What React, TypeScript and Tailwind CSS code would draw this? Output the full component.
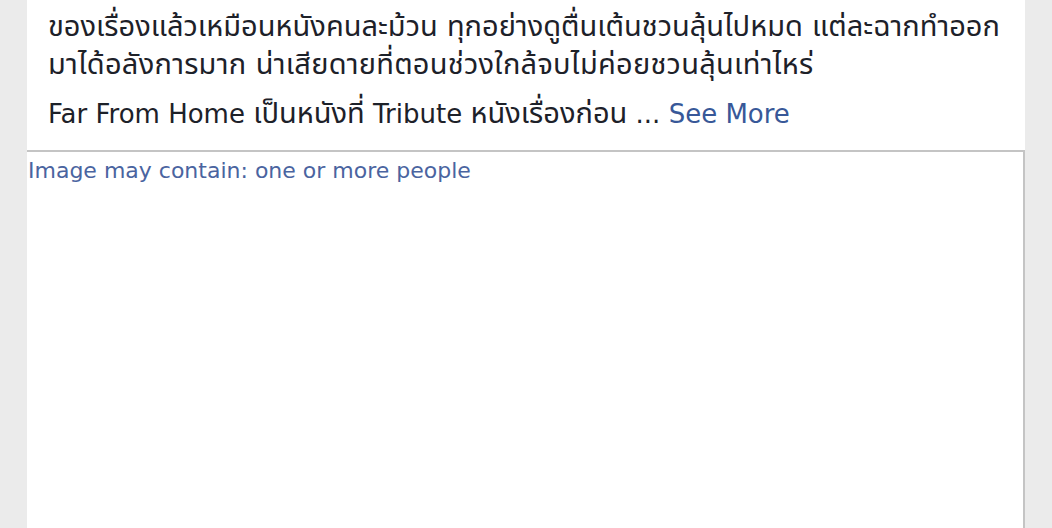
import React from "react";

const Th = ({ children }: { children: React.ReactNode }) => (
  <span className="text-[29px]">{children}</span>
);

const App = () => {
  return (
    <div className="h-[528px] w-[1052px] overflow-hidden bg-[#ebebeb] font-['DejaVu_Sans','Noto_Sans_Thai',sans-serif]">
      <div className="ml-[27px] flex h-full w-[998px] flex-col bg-white">
        <div className="flex flex-col gap-[11px] px-[21px] pt-[8px] pb-[17px] text-[26px] leading-[37px] text-[#1d2129]">
          <p className="whitespace-nowrap">
            <Th>ของเรื่องแล้วเหมือนหนังคนละม้วน ทุกอย่างดูตื่นเต้นชวนลุ้นไปหมด แต่ละฉากทำออก</Th>
            <br />
            <Th>
              <span className="tracking-[0.25px]">มาได้อลังการมาก น่าเสียดายที่ตอนช่วงใกล้จบไม่ค่อยชวนลุ้นเท่าไหร่</span>
            </Th>
          </p>
          <p className="whitespace-nowrap">
            Far From Home <Th>เป็นหนังที่</Th> Tribute <Th>หนังเรื่องก่อน</Th> ...{" "}
            <span className="text-[#385898]">See More</span>
          </p>
        </div>
        <div className="flex-1 border-t-2 border-r-2 border-[#c4c4c4] pl-[1px] pt-[5px]">
          <p className="text-[22px] leading-[28px] text-[#4a64a0]">
            Image may contain: one or more people
          </p>
        </div>
      </div>
    </div>
  );
};

export default App;
